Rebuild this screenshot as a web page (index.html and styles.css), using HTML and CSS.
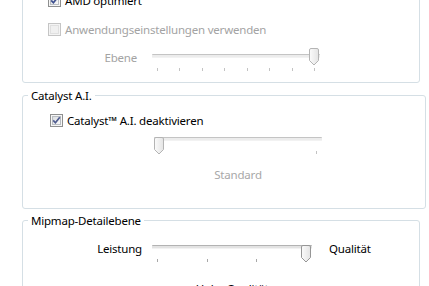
FILE: index.html
```html
<!DOCTYPE html>
<html lang="de">
<head>
    <meta charset="UTF-8">
    <title>Catalyst Control Center - 3D</title>
    <link rel="stylesheet" href="styles.css">
</head>
<body>

    <svg class="defs" width="0" height="0" aria-hidden="true">
        <defs>
            <linearGradient id="boxFill" x1="0" y1="0" x2="1" y2="1">
                <stop offset="0" stop-color="#d9dcdf"/>
                <stop offset="1" stop-color="#fbfbfb"/>
            </linearGradient>
            <linearGradient id="thumbFill" x1="0" y1="0" x2="1" y2="0">
                <stop offset="0" stop-color="#fbfbfb"/>
                <stop offset="1" stop-color="#e4e4e4"/>
            </linearGradient>
        </defs>
    </svg>

    <div class="panel">

        <!-- Anti-Aliasing (scrolled partly out of view) -->
        <fieldset class="group group-first">
            <label class="check">
                <svg class="box" width="13" height="13" viewBox="0 0 13 13">
                    <rect x="0.5" y="0.5" width="12" height="12" fill="#f6f6f6" stroke="#8e8f8f"/>
                    <rect x="2.5" y="2.5" width="8" height="8" fill="url(#boxFill)" stroke="#b9bdc2"/>
                    <path d="M3.2 6.4 L5.4 8.8 L9.8 3.2" fill="none" stroke="#3d4f8f" stroke-width="1.7"/>
                </svg>
                AMD optimiert
            </label>
            <label class="check disabled">
                <svg class="box" width="13" height="13" viewBox="0 0 13 13">
                    <rect x="0.5" y="0.5" width="12" height="12" fill="#f4f4f4" stroke="#c5c5c5"/>
                    <rect x="2.5" y="2.5" width="8" height="8" fill="#f0f0f0" stroke="#e0e0e0"/>
                </svg>
                Anwendungseinstellungen verwenden
            </label>
            <div class="slider-row row-ebene">
                <span class="slider-label disabled">Ebene</span>
                <div class="slider disabled" style="width: 168px">
                    <div class="track"></div>
                    <svg class="thumb" style="left: 157px" width="10" height="18" viewBox="0 0 10 18">
                        <path d="M0.5 2 Q0.5 0.5 2 0.5 H8 Q9.5 0.5 9.5 2 V12.5 L5 17 L0.5 12.5 Z" fill="url(#thumbFill)" stroke="#b4b4b4"/>
                    </svg>
                    <div class="ticks">
                        <i></i><i></i><i></i><i></i><i></i><i></i><i></i><i></i>
                    </div>
                </div>
            </div>
        </fieldset>

        <!-- Catalyst A.I. -->
        <fieldset class="group group-ai">
            <legend>Catalyst A.I.</legend>
            <label class="check check-ai">
                <svg class="box" width="13" height="13" viewBox="0 0 13 13">
                    <rect x="0.5" y="0.5" width="12" height="12" fill="#f6f6f6" stroke="#8e8f8f"/>
                    <rect x="2.5" y="2.5" width="8" height="8" fill="url(#boxFill)" stroke="#b9bdc2"/>
                    <path d="M3.2 6.4 L5.4 8.8 L9.8 3.2" fill="none" stroke="#4f5c8f" stroke-width="1.7"/>
                </svg>
                Catalyst™ A.I. deaktivieren
            </label>
            <div class="slider-block block-ai">
                <div class="slider disabled" style="width: 168px">
                    <div class="track"></div>
                    <svg class="thumb" style="left: 0px" width="10" height="18" viewBox="0 0 10 18">
                        <path d="M0.5 2 Q0.5 0.5 2 0.5 H8 Q9.5 0.5 9.5 2 V12.5 L5 17 L0.5 12.5 Z" fill="url(#thumbFill)" stroke="#b4b4b4"/>
                    </svg>
                    <div class="ticks">
                        <i></i><i></i>
                    </div>
                </div>
                <div class="caption disabled">Standard</div>
            </div>
        </fieldset>

        <!-- Mipmap-Detailebene -->
        <fieldset class="group group-mip">
            <legend>Mipmap-Detailebene</legend>
            <div class="slider-row row-mip">
                <span class="slider-label">Leistung</span>
                <div class="slider-block">
                    <div class="slider" style="width: 160px">
                        <div class="track"></div>
                        <svg class="thumb" style="left: 149px" width="10" height="18" viewBox="0 0 10 18">
                            <path d="M0.5 2 Q0.5 0.5 2 0.5 H8 Q9.5 0.5 9.5 2 V12.5 L5 17 L0.5 12.5 Z" fill="url(#thumbFill)" stroke="#969696"/>
                        </svg>
                        <div class="ticks">
                            <i></i><i></i><i></i><i></i>
                        </div>
                    </div>
                    <div class="caption caption-mip">Hohe Qualität</div>
                </div>
                <span class="slider-label label-right">Qualität</span>
            </div>
        </fieldset>

    </div>

</body>
</html>
```

FILE: styles.css
```css
body {
    margin: 0;
    padding: 0;
    font-family: 'Noto Sans', 'Open Sans', sans-serif;
    font-size: 11.5px;
    letter-spacing: -0.2px;
    line-height: 15px;
    color: #000;
    background-color: #fff;
    height: 286px;
    overflow: hidden;
}

.defs {
    position: absolute;
}

.panel {
    padding-left: 22px;
    width: 398px;
}

/* Group boxes */
.group {
    margin: 0;
    padding: 0;
    border: 1px solid #d5dfe5;
    border-radius: 3px;
    min-width: 0;
}

.group legend {
    margin-left: 5px;
    padding: 0 3px;
    line-height: 15px;
}

.group-first {
    margin-top: -30px;
    padding-top: 20px;
    padding-bottom: 10px;
}

.group-ai {
    width: 402px;
    margin-top: 5px;
    padding-top: 8px;
    padding-bottom: 26px;
}

.group-mip {
    margin-top: 4px;
    padding-top: 11px;
    height: 80px;
}

/* Check boxes */
.check {
    display: flex;
    align-items: center;
    gap: 4px;
    height: 19px;
    padding-left: 25px;
    margin-bottom: 10px;
}

.check.disabled {
    color: #a3a3a3;
    margin-bottom: 9px;
}

.check-ai {
    padding-left: 27px;
    margin-bottom: 7px;
}

.box {
    flex: none;
}

/* Track bars */
.slider-row {
    display: flex;
    align-items: flex-start;
}

.slider-label {
    flex: none;
    margin-top: 2px;
    text-align: right;
}

.row-ebene {
    gap: 15px;
}

.row-ebene .slider-label {
    width: 114px;
}

.row-mip {
    gap: 10px;
}

.row-mip .slider-label {
    width: 119px;
}

.row-mip .label-right {
    width: auto;
    margin-left: 7px;
    text-align: left;
}

.slider-label.disabled {
    color: #a3a3a3;
}

.slider {
    position: relative;
    height: 24px;
}

.track {
    margin-top: 6px;
    height: 2px;
    border-top: 1px solid #b3b3b3;
    border-bottom: 1px solid #f2f2f2;
    background-color: #e3e3e3;
    border-radius: 1px;
}

.slider.disabled .track {
    border-top-color: #c4c4c4;
    background-color: #ececec;
}

.thumb {
    position: absolute;
    top: 0;
}

.ticks {
    display: flex;
    justify-content: space-between;
    padding: 0 5px;
    margin-top: 10px;
}

.ticks i {
    width: 1px;
    height: 3px;
    background-color: #a8a8a8;
}

.slider.disabled .ticks i {
    background-color: #c3c3c3;
}

.block-ai {
    padding-left: 131px;
    width: 168px;
}

.caption {
    text-align: center;
    margin-top: 6px;
}

.caption.disabled {
    color: #a8a8a8;
}

.caption-mip {
    margin-top: 12px;
}
```
